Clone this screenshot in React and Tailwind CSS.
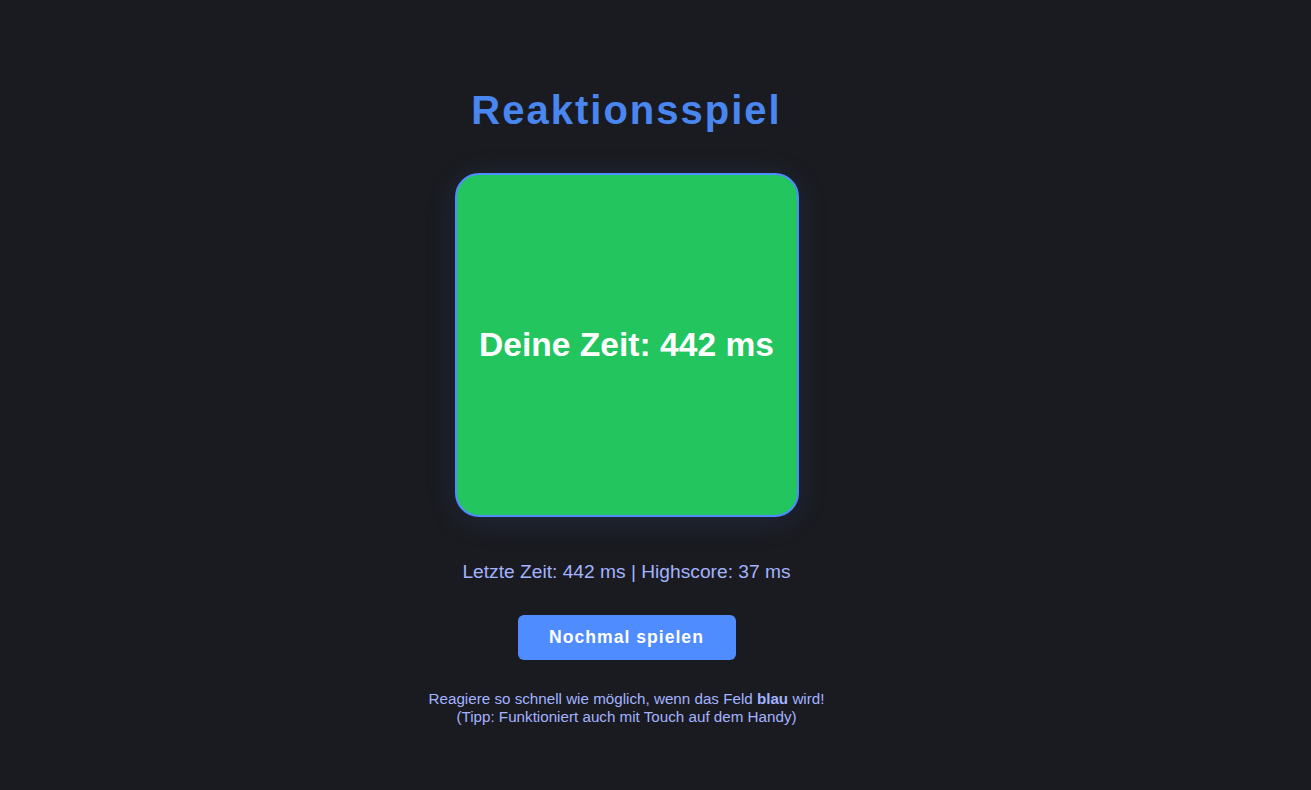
export default function App() {
  return (
    <div
      className="min-h-screen w-full bg-[#1a1b20] flex flex-col items-center pt-[86px] pr-[58px]"
      style={{ fontFamily: '"Liberation Sans", Arial, sans-serif' }}
    >
      <h1 className="text-[40px] leading-[48px] font-bold tracking-[2px] text-[#4a86f0]">
        Reaktionsspiel
      </h1>

      <div className="mt-[39px] w-[344px] h-[344px] rounded-[24px] border-2 border-[#4f8cff] bg-[#22c55e] flex items-center justify-center shadow-[0_4px_32px_rgba(79,140,255,0.12)]">
        <span className="text-[33.6px] font-bold text-white">Deine Zeit: 442 ms</span>
      </div>

      <p className="mt-[43px] text-[19.2px] leading-[24px] text-[#a3b3ff]">
        Letzte Zeit: 442 ms | Highscore: 37 ms
      </p>

      <button className="mt-[31px] w-[218px] h-[45px] rounded-[6px] bg-[#4f8cff] text-white text-[17.6px] font-bold tracking-[1px]">
        Nochmal spielen
      </button>

      <div className="mt-[30px] text-center text-[15.2px] leading-[18px] text-[#a3b3ff]">
        <p>
          Reagiere so schnell wie möglich, wenn das Feld <b>blau</b> wird!
        </p>
        <p>(Tipp: Funktioniert auch mit Touch auf dem Handy)</p>
      </div>
    </div>
  );
}
